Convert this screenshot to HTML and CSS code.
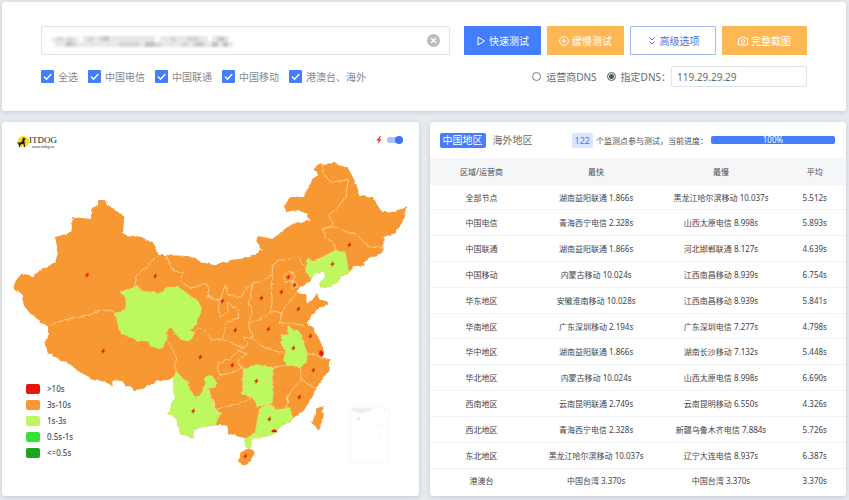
FILE: index.html
```html
<!DOCTYPE html>
<html lang="zh-CN">
<head>
    <meta charset="UTF-8">
    <meta name="viewport" content="width=device-width, initial-scale=1.0">
    <title>ITDOG</title>
    <link rel="stylesheet" href="styles.css">
</head>
<body>
    <section class="card search-card">
        <div class="search-row">
            <div class="url-field">
                <input type="text" class="url-input" aria-label="URL">
                <!-- masked address -->
                <svg class="url-mask" viewBox="0 0 181 12" width="181" height="12" aria-hidden="true">
                    <path fill="#e8e8e8" d="M0 1h26v5H0zM31 0h72v6H31zM108 0h48v6h-48zM160 0h17v6h-17zM3 6h178v5H3z"/>
                    <path fill="#d6d6d6" d="M5 1h6v4H5zM15 1h6v5h-6zM36 1h5v5h-5zM47 0h10v5H47zM119 1h5v5h-5zM135 0h12v5h-12zM165 0h5v6h-5zM13 6h11v5H13zM67 6h20v5H67zM103 6h6v5h-6zM130 6h6v5h-6zM141 6h12v5h-12z"/>
                    <path fill="#c4c4c4" d="M15 6h5v4h-5zM52 1h5v4h-5zM93 6h10v5H93zM145 6h5v4h-5zM160 6h6v5h-6zM171 6h5v5h-5zM168 1h5v4h-5z"/>
                </svg>
                <button type="button" class="clear-btn" aria-label="清除">
                    <svg viewBox="0 0 13 13" width="13" height="13"><circle cx="6.5" cy="6.5" r="6.5" fill="#bbb"/><path d="M4 4l5 5M9 4l-5 5" stroke="#fff" stroke-width="1.3"/></svg>
                </button>
            </div>
            <div class="buttons">
                <button type="button" class="btn btn-blue">
                    <svg class="icon" viewBox="0 0 10 10"><path d="M2 1l6.500 4L2 9z"/></svg>快速测试
                </button>
                <button type="button" class="btn btn-orange">
                    <svg class="icon" viewBox="0 0 10 10"><circle cx="5" cy="5" r="4.400"/><path d="M4 3.200l3 1.800-3 1.800z"/></svg>缓慢测试
                </button>
                <button type="button" class="btn btn-outline">
                    <svg class="icon" viewBox="0 0 10 10"><path d="M2.500 1.500L5 4l2.500-2.500M2.500 5.500L5 8l2.500-2.500"/></svg>高级选项
                </button>
                <button type="button" class="btn btn-orange btn-wide">
                    <svg class="icon" viewBox="0 0 10 10"><path d="M.5 2.500h2.200L3.500 1h3l.8 1.500h2.200V9h-9z"/><circle cx="5" cy="5.500" r="1.800"/></svg>完整截图
                </button>
            </div>
        </div>
        <div class="option-row">
            <div class="checks">
                <label><input type="checkbox" checked>全选</label>
                <label><input type="checkbox" checked>中国电信</label>
                <label><input type="checkbox" checked>中国联通</label>
                <label><input type="checkbox" checked>中国移动</label>
                <label><input type="checkbox" checked>港澳台、海外</label>
            </div>
            <div class="dns">
                <label><input type="radio" name="dns">运营商DNS</label>
                <label><input type="radio" name="dns" checked>指定DNS：</label>
                <input type="text" class="dns-input" value="119.29.29.29" aria-label="DNS">
            </div>
        </div>
    </section>

    <main class="panels">
        <section class="card map-card">
            <div class="map-header">
                <div class="logo">
                    <svg viewBox="0 0 12 12" width="12" height="12" aria-hidden="true">
                        <circle cx="6.500" cy="5.500" r="5.500" fill="#f6dc14"/>
                        <path fill="#2b1d10" d="M6.300 1.300l.8.700 1.600.7-.2.900-1.100.3.200 2.700.6 4.300H7.100L6.500 8 4.200 8.300 3 9.500l.2 1.800H2.100L1.700 9 .6 7.300.5 5.800l1.200 1 3-1 .8-2.300z"/>
                    </svg>
                    <div class="logo-text">
                        <span class="logo-name">ITDOG</span>
                        <span class="logo-site">www.itdog.cn</span>
                    </div>
                </div>
                <label class="switch">
                    <svg viewBox="-3 -4 6 8" width="6" height="8" aria-hidden="true"><path fill="#e8262d" d="M1-4l-3.500 4.500H-.3L-1.200 4 2.500-.8H.4L2-4z"/></svg>
                    <input type="checkbox" checked aria-label="闪烁">
                </label>
            </div>

            <svg class="map" viewBox="2 155 416 315" role="img" aria-label="中国地图">
                <defs>
                    <path id="bolt" d="M1-3L-2.300.5H-.4L-1 3 2.300-.8H.4L1.400-3z"/>
                    <filter id="coast" x="0" y="0" width="1" height="1" color-interpolation-filters="sRGB">
                        <feTurbulence type="fractalNoise" baseFrequency="0.16" numOctaves="2" seed="4"/>
                        <feDisplacementMap in="SourceGraphic" scale="4" xChannelSelector="R" yChannelSelector="G"/>
                    </filter>
                </defs>
                <g filter="url(#coast)">
                    <rect x="2" y="155" width="416" height="315" fill="#fff"/>
                    <g class="slow">
                        <path d="M98 200L104 200 108 207 117 211 124 218 123 232 126 235 142 237 152 243 159 255 166 255 188 256 202 262 215 265 232 260 250 257 262 250 257 243 258 236 272 239 287 227 298 222 310 221 307 215 298 210 285 212 283 208 290 196 304 196 309 183 318 174 313 168 322 164 335 163 347 167 354 180 360 196 373 198 382 212 395 212 406 207 402 222 395 233 383 237 383 250 378 255 363 262 363 266 357 264 348 271 337 281 332 286 321 288 319 283 325 275 323 271 316 273 308 282 299 287 297 293 306 294 306 302 310 302 317 293 319 299 328 302 326 305 318 309 309 318 307 323 313 327 317 335 323 348 322 357 329 359 328 370 321 382 315 388 313 395 305 408 293 418 280 428 272 435 253 438 250 448 246 447 245 438 241 437 227 433 226 425 220 425 215 425 200 427 194 430 194 438 180 433 178 422 173 415 168 413 174 398 173 378 167 380 157 380 145 388 133 390 132 386 125 386 123 381 113 380 112 387 108 382 95 380 80 372 67 362 60 360 48 353 45 343 48 336 48 327 30 313 22 303 23 295 15 288 14 283 20 275 25 274 32 276 45 267 55 263 58 252 55 237 70 233 73 217 90 219 92 208 98 205z"/>
                        <path d="M239 453L248 448 254 451 250 461 244 465 238 462z"/>
                        <path d="M322 405L323 408 321 423 317 431 312 422 316 409z"/>
                    </g>
                    <g class="quick">
                        <path d="M121 292L137 286 143 291 158 293 163 290 165 287 178 287 190 295 200 303 201 312 197 318 197 325 189 329 195 333 189 341 180 339 171 328 167 330 167 338 163 347 159 349 150 345 148 341 137 340 120 333 115 313 125 310 127 302z"/>
                        <path d="M176 372L183 378 188 382 190 391 195 397 202 393 205 378 210 376 216 382 215 387 208 388 211 395 213 403 220 413 215 425 200 427 194 430 194 438 180 433 178 422 173 415 168 413 174 398 173 378z"/>
                        <path d="M243 368L257 364 265 366 272 367 273 375 273 390 272 403 257 407 253 397 242 395z"/>
                        <path d="M259 409L268 404 278 409 290 408 293 417 280 428 272 435 253 438 250 448 246 447 245 438 255 432 257 420z"/>
                        <path d="M288 325L293 330 300 332 302 341 307 353 306 362 300 368 287 365 283 360 285 353 283 347 280 342 282 335 287 333z"/>
                        <path d="M335 250L345 253 348 270 337 281 332 286 321 288 319 283 325 275 323 271 316 273 311 278 304 268 308 258 312 261 328 254z"/>
                    </g>
                    <g class="borders">
                        <path d="M48 327L53 323 72 318 87 316 100 310 115 311M159 255L147 266 138 273 134 287M166 255L172 270 183 273 180 280 190 288 205 284 209 288 207 295 220 300 222 292 225 285 227 293 238 298 245 290 252 283 272 276 272 265 278 261 298 257 303 266"/>
                        <path d="M207 295L213 300 220 300M220 300L218 308 220 317 228 313 227 303 229 304 238 310 238 318 225 322 225 330 222 338M252 283L249 303 252 313 248 323 252 338M273 276L271 292 272 300 270 313 250 324M270 310L282 313 283 307 297 293M282 313L279 322 288 323 303 325M279 322L284 326"/>
                        <path d="M222 338L230 342 243 348 247 342 243 337 252 338 260 345 272 350 283 353M195 330L203 328 212 340 222 338M167 340L175 353 176 372M218 362L228 360 238 350 247 354 237 360 242 368 232 372 220 375 217 368 218 362M237 360L243 368M220 375L215 382M211 395L215 409 233 405 253 397M214 409L219 413M272 368L285 365M257 407L268 404"/>
                        <path d="M243 348L238 351M300 368L301 380 288 393 286 409M301 380L315 388M307 353L322 357M322 165L322 172 330 182 348 180 345 197 338 207 328 215 333 225M323 228L335 227 347 232 357 235 368 247 383 248M333 225L323 229 325 238 333 242 334 250M283 277L288 271 295 275 293 280 285 282zM292 280L297 283 297 288 292 289z"/>
                    </g>
                </g>
                <g fill="#e31b12">
                    <path d="M319 351l2-1 2 3-1 3-3-1z"/>
                    <path d="M271 431q3-4 6 0l-1 1h-4z"/>
                </g>
                <g class="bolts">
                    <use href="#bolt" x="87" y="275"/>
                    <use href="#bolt" x="155" y="276"/>
                    <use href="#bolt" x="349" y="245"/>
                    <use href="#bolt" x="332" y="264"/>
                    <use href="#bolt" x="288" y="277"/>
                    <use href="#bolt" x="294" y="285"/>
                    <use href="#bolt" x="281" y="292"/>
                    <use href="#bolt" x="261" y="298"/>
                    <use href="#bolt" x="222" y="301"/>
                    <use href="#bolt" x="298" y="309"/>
                    <use href="#bolt" x="235" y="330"/>
                    <use href="#bolt" x="268" y="329"/>
                    <use href="#bolt" x="310" y="336"/>
                    <use href="#bolt" x="293" y="348"/>
                    <use href="#bolt" x="321" y="353"/>
                    <use href="#bolt" x="313" y="370"/>
                    <use href="#bolt" x="232" y="365"/>
                    <use href="#bolt" x="200" y="357"/>
                    <use href="#bolt" x="103" y="351"/>
                    <use href="#bolt" x="256" y="381"/>
                    <use href="#bolt" x="299" y="397"/>
                    <use href="#bolt" x="193" y="411"/>
                    <use href="#bolt" x="269" y="419"/>
                    <use href="#bolt" x="245" y="456"/>
                </g>
                <!-- South China Sea inset -->
                <g class="inset">
                    <rect x="349.500" y="407.500" width="39" height="56"/>
                    <path d="M350 408h24q-5 4-12 5-8 0-12-5zM357 417l3-1v4l-3 1zM383 408l2 0-1 3zM380 425l2-1v3zM379 435l1 3-2 0zM361 448l2-1 0 2zM373 442l2 0-1 2z"/>
                </g>
            </svg>

            <ul class="legend">
                <li><span class="swatch swatch-red"></span>&gt;10s</li>
                <li><span class="swatch swatch-orange"></span>3s-10s</li>
                <li><span class="swatch swatch-lime"></span>1s-3s</li>
                <li><span class="swatch swatch-green"></span>0.5s-1s</li>
                <li><span class="swatch swatch-dark"></span>&lt;=0.5s</li>
            </ul>
        </section>

        <section class="card table-card">
            <div class="table-header">
                <div class="tabs">
                    <button type="button" class="tab active">中国地区</button>
                    <button type="button" class="tab">海外地区</button>
                </div>
                <div class="status">
                    <span class="badge">122</span>
                    <span>个监测点参与测试，当前进度：</span>
                    <div class="progress">100%</div>
                </div>
            </div>
            <table>
                <thead>
                    <tr><th class="col-area">区域/运营商</th><th class="col-speed">最快</th><th class="col-speed">最慢</th><th class="col-avg">平均</th></tr>
                </thead>
                <tbody>
                    <tr><td>全部节点</td><td>湖南益阳联通 1.866s</td><td>黑龙江哈尔滨移动 10.037s</td><td>5.512s</td></tr>
                    <tr><td>中国电信</td><td>青海西宁电信 2.328s</td><td>山西太原电信 8.998s</td><td>5.893s</td></tr>
                    <tr><td>中国联通</td><td>湖南益阳联通 1.866s</td><td>河北邯郸联通 8.127s</td><td>4.639s</td></tr>
                    <tr><td>中国移动</td><td>内蒙古移动 10.024s</td><td>江西南昌移动 8.939s</td><td>6.754s</td></tr>
                    <tr><td>华东地区</td><td>安徽淮南移动 10.028s</td><td>江西南昌移动 8.939s</td><td>5.841s</td></tr>
                    <tr><td>华南地区</td><td>广东深圳移动 2.194s</td><td>广东深圳电信 7.277s</td><td>4.798s</td></tr>
                    <tr><td>华中地区</td><td>湖南益阳联通 1.866s</td><td>湖南长沙移动 7.132s</td><td>5.448s</td></tr>
                    <tr><td>华北地区</td><td>内蒙古移动 10.024s</td><td>山西太原电信 8.998s</td><td>6.690s</td></tr>
                    <tr><td>西南地区</td><td>云南昆明联通 2.749s</td><td>云南昆明移动 6.550s</td><td>4.326s</td></tr>
                    <tr><td>西北地区</td><td>青海西宁电信 2.328s</td><td>新疆乌鲁木齐电信 7.884s</td><td>5.726s</td></tr>
                    <tr><td>东北地区</td><td>黑龙江哈尔滨移动 10.037s</td><td>辽宁大连电信 8.937s</td><td>6.387s</td></tr>
                    <tr><td>港澳台</td><td>中国台湾 3.370s</td><td>中国台湾 3.370s</td><td>3.370s</td></tr>
                </tbody>
            </table>
        </section>
    </main>
</body>
</html>
```
FILE: styles.css
```css
:root {
    --blue: #447dfd;
    --orange: #ffb754;
    --border: #e0e3e8;
    --text: #4c4f54;
    --muted: #85898e;
}

* {
    margin: 0;
    padding: 0;
    box-sizing: border-box;
}

body {
    display: flex;
    flex-direction: column;
    gap: 11px;
    min-height: 100vh;
    padding: 2px 3px 4px 2px;
    background-color: #e6eaef;
    color: var(--text);
    font-family: "Noto Sans", "Noto Sans CJK SC", sans-serif;
    font-size: 8px;
}

button,
input {
    font: inherit;
    color: inherit;
}

button {
    border: none;
    background: none;
    cursor: pointer;
}

.card {
    background-color: #fff;
    border-radius: 3px;
    box-shadow: 0 1px 4px rgba(70, 85, 120, 0.22);
}

/* Search */
.search-card {
    padding: 24px 39px;
    font-size: 10px;
}

.search-row {
    display: flex;
    gap: 14px;
}

.url-field {
    position: relative;
    flex: 1;
}

.url-input {
    display: block;
    width: 100%;
    height: 29px;
    padding: 0 28px 0 11px;
    border: 1px solid var(--border);
    border-radius: 2px;
}

.url-mask {
    position: absolute;
    top: 10px;
    left: 11px;
    filter: blur(1px);
}

.clear-btn {
    position: absolute;
    top: 8px;
    right: 10px;
    height: 13px;
}

.clear-btn svg {
    display: block;
}

.buttons {
    display: flex;
    gap: 6px;
}

.btn {
    display: flex;
    align-items: center;
    justify-content: center;
    gap: 3px;
    width: 77px;
    height: 29px;
    border-radius: 1px;
    color: #fff;
}

.btn-blue {
    background-color: var(--blue);
}

.btn-orange {
    background-color: var(--orange);
}

.btn-outline {
    width: 86px;
    border: 1px solid #a3b8f5;
    color: #4a6fe0;
}

.btn-wide {
    width: 85px;
}

.icon {
    width: 10px;
    height: 10px;
    fill: none;
    stroke: currentColor;
}

.option-row {
    display: flex;
    justify-content: space-between;
    align-items: center;
    margin-top: 11px;
    color: var(--muted);
}

.checks,
.dns,
.option-row label {
    display: flex;
    align-items: center;
}

.checks {
    gap: 10px;
}

.checks label {
    gap: 4px;
}

.checks input {
    appearance: none;
    width: 13px;
    height: 13px;
    border-radius: 1px;
    background: var(--blue) url("data:image/svg+xml,%3Csvg xmlns='http://www.w3.org/2000/svg' viewBox='0 0 13 13'%3E%3Cpath d='M3 6.500l2.500 2.700L10.300 4' fill='none' stroke='white' stroke-width='1.400'/%3E%3C/svg%3E");
}

.dns {
    color: #666a70;
}

.dns label {
    gap: 5px;
}

.dns label + label {
    margin-left: 10px;
}

.dns input[type="radio"] {
    appearance: none;
    width: 9px;
    height: 9px;
    border: 1px solid #777;
    border-radius: 50%;
}

.dns input[type="radio"]:checked {
    background-color: #555;
    box-shadow: inset 0 0 0 1px #fff;
}

.dns-input {
    width: 136px;
    height: 21px;
    padding: 0 5px;
    border: 1px solid var(--border);
    border-radius: 2px;
}

/* Panels */
.panels {
    display: grid;
    flex: 1;
    grid-template-columns: 1fr 1fr;
    gap: 11px;
}

.map-card {
    position: relative;
}

.map-header {
    display: flex;
    justify-content: space-between;
    height: 33px;
    padding: 14px 16px 0 15px;
}

.logo {
    display: flex;
    color: #222;
}

.logo-text {
    display: flex;
    flex-direction: column;
    font-family: "Liberation Serif", serif;
}

.logo-name {
    font-size: 9px;
    line-height: 9px;
}

.logo-site {
    font-size: 4px;
    line-height: 3px;
    text-align: center;
}

.switch {
    display: flex;
    align-items: center;
    gap: 5px;
    height: 8px;
}

.switch input {
    appearance: none;
    width: 16px;
    height: 6px;
    border-radius: 3px;
    background-color: #a9c0fb;
}

.switch input::before {
    content: "";
    display: block;
    width: 8px;
    height: 8px;
    margin: -1px 0 0 8px;
    border-radius: 50%;
    background-color: #3f74f3;
}

.map {
    display: block;
    width: 100%;
}

.slow {
    fill: #f79833;
}

.quick {
    fill: #bdf85f;
    stroke: #e9dd83;
    stroke-width: 0.5;
}

.borders {
    fill: none;
    stroke: #ffcf8f;
    stroke-width: 0.9;
}

.bolts {
    fill: #d9230f;
}

.inset rect {
    fill: none;
    stroke: #f8f8f8;
}

.inset path {
    fill: #eee;
}

.legend {
    position: absolute;
    bottom: 38px;
    left: 24px;
    display: grid;
    gap: 5px;
    color: #333;
    line-height: 11px;
    list-style: none;
}

.legend li {
    display: flex;
    align-items: center;
    gap: 7px;
}

.swatch {
    width: 14px;
    height: 10px;
    border-radius: 2px;
}

.swatch-red {
    background-color: #e9150d;
}

.swatch-orange {
    background-color: #f79833;
}

.swatch-lime {
    background-color: #bdf85f;
}

.swatch-green {
    background-color: #36e136;
}

.swatch-dark {
    background-color: #1aa51a;
}

/* Results */
.table-card {
    display: flex;
    flex-direction: column;
    padding-bottom: 3px;
}

.table-header {
    display: flex;
    align-items: center;
    gap: 36px;
    height: 36px;
    padding: 0 11px 0 10px;
}

.tabs {
    display: flex;
    gap: 4px;
}

.tab {
    height: 15px;
    padding: 0 3px;
    border-radius: 2px;
    color: #666a70;
    font-size: 10px;
    line-height: 15px;
}

.tab.active {
    background-color: var(--blue);
    color: #fff;
}

.status {
    display: flex;
    flex: 1;
    align-items: center;
    gap: 3px;
    white-space: nowrap;
}

.badge {
    padding: 0 3px;
    border-radius: 2px;
    background-color: #dae5ff;
    color: #4a78ee;
    font-size: 9px;
    line-height: 15px;
}

.progress {
    flex: 1;
    height: 8px;
    border-radius: 2px;
    background-color: var(--blue);
    color: #fff;
    line-height: 8px;
    text-align: center;
}

table {
    flex: 1;
    width: 100%;
    border-collapse: collapse;
    table-layout: fixed;
    text-align: center;
    line-height: 11px;
    white-space: nowrap;
}

th {
    height: 27px;
    background-color: #f5f6f7;
    font-weight: 400;
}

td {
    border-bottom: 1px solid #f1f2f3;
    color: #3f4246;
}

tr:last-child td {
    border-bottom: none;
}

.col-area {
    width: 25%;
}

.col-speed {
    width: 30%;
}

.col-avg {
    width: 15%;
}
```
